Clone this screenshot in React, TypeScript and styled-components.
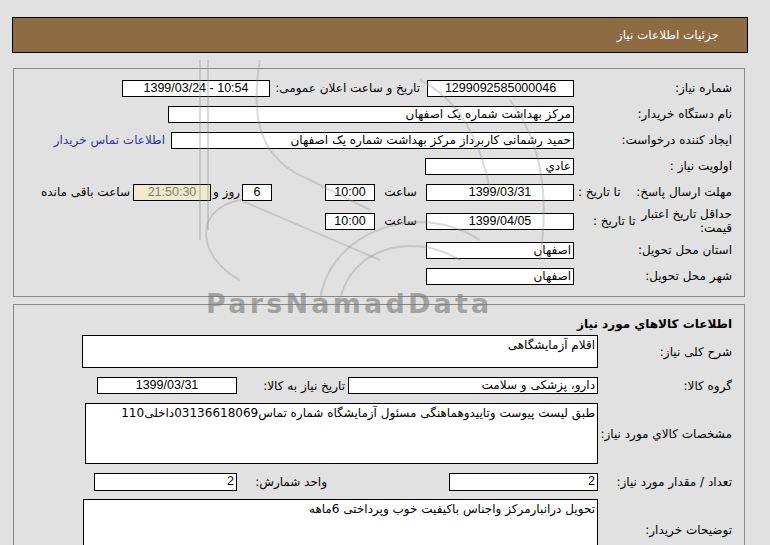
import styled, { createGlobalStyle } from 'styled-components';

const GlobalStyle = createGlobalStyle`
  html, body {
    margin: 0;
    padding: 0;
    background: #e1e1e1;
  }
  body {
    font-family: "DejaVu Sans", "Liberation Sans", sans-serif;
    font-size: 12px;
    color: #000;
  }
`;

const Page = styled.div`
  position: relative;
  width: 770px;
  height: 545px;
  overflow: hidden;
  direction: rtl;
  box-sizing: border-box;
  padding: 17px 22px 0 12px;
`;

const Header = styled.div`
  height: 36px;
  box-sizing: border-box;
  border: 1px solid #000;
  background: #8c6c40;
  color: #fff;
  display: flex;
  align-items: center;
  padding-right: 28px;
  font-size: 12px;
`;

const Panel = styled.div<{ $top: number; $pt: number; $pb: number }>`
  margin: ${(p) => p.$top}px 3px 0 1px;
  border: 1px solid #888;
  padding: ${(p) => p.$pt}px 12px ${(p) => p.$pb}px 9px;
  display: flex;
  flex-direction: column;
`;

const Row = styled.div<{ $h?: number; $mt?: number }>`
  display: flex;
  align-items: center;
  min-height: ${(p) => p.$h ?? 26}px;
  margin-top: ${(p) => p.$mt ?? 0}px;
`;

const Label = styled.div<{ $w: number }>`
  width: ${(p) => p.$w}px;
  flex-shrink: 0;
  display: flex;
  align-items: center;
  justify-content: space-between;
  white-space: nowrap;
`;

const WrapLabel = styled.div`
  width: 92px;
  white-space: normal;
  line-height: 14px;
`;

const SubLabel = styled.div<{ $w?: number; $pr?: number; $center?: boolean }>`
  ${(p) => (p.$w ? `width: ${p.$w}px;` : '')}
  flex-shrink: 0;
  box-sizing: border-box;
  padding-right: ${(p) => p.$pr ?? 0}px;
  text-align: ${(p) => (p.$center ? 'center' : 'right')};
  white-space: nowrap;
`;

const Spacer = styled.div<{ $w: number }>`
  width: ${(p) => p.$w}px;
  flex-shrink: 0;
`;

const Field = styled.div<{
  $w: number;
  $h?: number;
  $center?: boolean;
  $top?: boolean;
  $bg?: string;
  $color?: string;
}>`
  width: ${(p) => p.$w}px;
  height: ${(p) => p.$h ?? 17}px;
  flex-shrink: 0;
  box-sizing: border-box;
  border: 1px solid #000;
  background: ${(p) => p.$bg ?? '#fff'};
  color: ${(p) => p.$color ?? '#000'};
  line-height: 15px;
  padding: ${(p) => (p.$top ? '2px' : '0')} 2px 0 2px;
  text-align: ${(p) => (p.$center ? 'center' : 'right')};
  white-space: ${(p) => (p.$top ? 'normal' : 'nowrap')};
  overflow: hidden;
`;

const Num = styled.span`
  font-family: "Liberation Sans", "DejaVu Sans", sans-serif;
  font-size: 12.5px;
`;

const ContactLink = styled.a`
  margin-right: 6px;
  color: #34349c;
  text-decoration: none;
  white-space: nowrap;
`;

const Title = styled.div`
  height: 22px;
  line-height: 22px;
  font-weight: bold;
`;

const Watermark = styled.div`
  position: absolute;
  left: 206px;
  top: 288px;
  direction: ltr;
  font-family: "DejaVu Sans", sans-serif;
  font-weight: bold;
  font-size: 27px;
  letter-spacing: 3.2px;
  color: rgba(120, 120, 120, 0.6);
  pointer-events: none;
`;

const Logo = styled.svg`
  position: absolute;
  left: 180px;
  top: 60px;
  pointer-events: none;
`;

export default function App() {
  return (
    <>
      <GlobalStyle />
      <Page>
        <Header>جزئیات اطلاعات نیاز</Header>

        <Panel $top={15} $pt={6} $pb={7}>
          <Row>
            <Label $w={158}>شماره نیاز:</Label>
            <Field $w={147} $center>
              <Num>1299092585000046</Num>
            </Field>
            <SubLabel $w={157} $pr={7}>
              تاریخ و ساعت اعلان عمومی:
            </SubLabel>
            <Field $w={148} $center dir="ltr">
              <Num>1399/03/24 - 10:54</Num>
            </Field>
          </Row>
          <Row>
            <Label $w={158}>نام دستگاه خریدار:</Label>
            <Field $w={406}>مرکز بهداشت شماره یک اصفهان</Field>
          </Row>
          <Row>
            <Label $w={158}>ایجاد کننده درخواست:</Label>
            <Field $w={403}>حمید رشمانی کاربرداز مرکز بهداشت شماره یک اصفهان</Field>
            <ContactLink href="#">اطلاعات تماس خریدار</ContactLink>
          </Row>
          <Row>
            <Label $w={158}>اولویت نیاز :</Label>
            <Field $w={149}>عادي</Field>
          </Row>
          <Row>
            <Label $w={158}>
              <span>مهلت ارسال پاسخ:</span>
              <span style={{ paddingLeft: 4 }}>تا تاریخ :</span>
            </Label>
            <Field $w={148} $center>
              <Num>1399/03/31</Num>
            </Field>
            <SubLabel $w={51} $center>
              ساعت
            </SubLabel>
            <Field $w={50} $center>
              <Num>10:00</Num>
            </Field>
            <Spacer $w={53} />
            <Field $w={30} $center>
              <Num>6</Num>
            </Field>
            <SubLabel $w={31} $center>
              روز و
            </SubLabel>
            <Field $w={78} $center $bg="#eeeacb" $color="#7d7d70">
              <Num>21:50:30</Num>
            </Field>
            <SubLabel $pr={3}>ساعت باقی مانده</SubLabel>
          </Row>
          <Row $h={32}>
            <Label $w={158}>
              <WrapLabel>حداقل تاریخ اعتبار قیمت:</WrapLabel>
              <span style={{ paddingLeft: 19 }}>تا تاریخ :</span>
            </Label>
            <Field $w={148} $center>
              <Num>1399/04/05</Num>
            </Field>
            <SubLabel $w={51} $center>
              ساعت
            </SubLabel>
            <Field $w={50} $center>
              <Num>10:00</Num>
            </Field>
          </Row>
          <Row>
            <Label $w={158}>استان محل تحویل:</Label>
            <Field $w={148}>اصفهان</Field>
          </Row>
          <Row>
            <Label $w={158}>شهر محل تحویل:</Label>
            <Field $w={148}>اصفهان</Field>
          </Row>
        </Panel>

        <Panel $top={7} $pt={8} $pb={20}>
          <Title>اطلاعات کالاهاي مورد نياز</Title>
          <Row $h={33}>
            <Label $w={134}>شرح کلی نیاز:</Label>
            <Field $w={516} $h={33} $top>
              اقلام آزمایشگاهی
            </Field>
          </Row>
          <Row $h={17} $mt={9}>
            <Label $w={134}>گروه کالا:</Label>
            <Field $w={250}>دارو، پزشکی و سلامت</Field>
            <SubLabel $w={111} $pr={3}>
              تاریخ نیاز به کالا:
            </SubLabel>
            <Field $w={140} $center>
              <Num>1399/03/31</Num>
            </Field>
          </Row>
          <Row $h={61} $mt={9}>
            <Label $w={134}>مشخصات کالاي مورد نیاز:</Label>
            <Field $w={513} $h={61} $top>
              طبق لیست پیوست وتاییدوهماهنگی مسئول آزمایشگاه شماره تماس03136618069داخلی110
            </Field>
          </Row>
          <Row $h={18} $mt={9}>
            <Label $w={134}>تعداد / مقدار مورد نیاز:</Label>
            <Field $w={149} $h={18}>
              <Num>2</Num>
            </Field>
            <SubLabel $w={212} $pr={122}>
              واحد شمارش:
            </SubLabel>
            <Field $w={143} $h={18}>
              <Num>2</Num>
            </Field>
          </Row>
          <Row $h={61} $mt={8}>
            <Label $w={134}>توضیحات خریدار:</Label>
            <Field $w={515} $h={61} $top>
              تحویل درانبارمرکز واجناس باکیفیت خوب وپرداختی 6ماهه
            </Field>
          </Row>
        </Panel>

        <Logo width="400" height="240" viewBox="0 0 400 240">
          <g fill="none" stroke="rgba(150,150,150,0.35)" strokeWidth="2">
            <path d="M60 220 C 20 200, 10 150, 60 140 L 200 200" />
            <path d="M140 240 C 150 170, 240 140, 300 180" />
            <path d="M160 240 C 170 190, 230 170, 280 200" />
            <path d="M20 0 L 20 180" />
            <path d="M28 0 L 28 170" />
            <path d="M80 0 C 70 60, 80 100, 130 120 L 190 150" />
            <path d="M240 20 C 280 40, 300 80, 310 130" />
            <path d="M330 40 C 360 80, 370 130, 360 200" />
          </g>
        </Logo>
        <Watermark>ParsNamadData</Watermark>
      </Page>
    </>
  );
}
